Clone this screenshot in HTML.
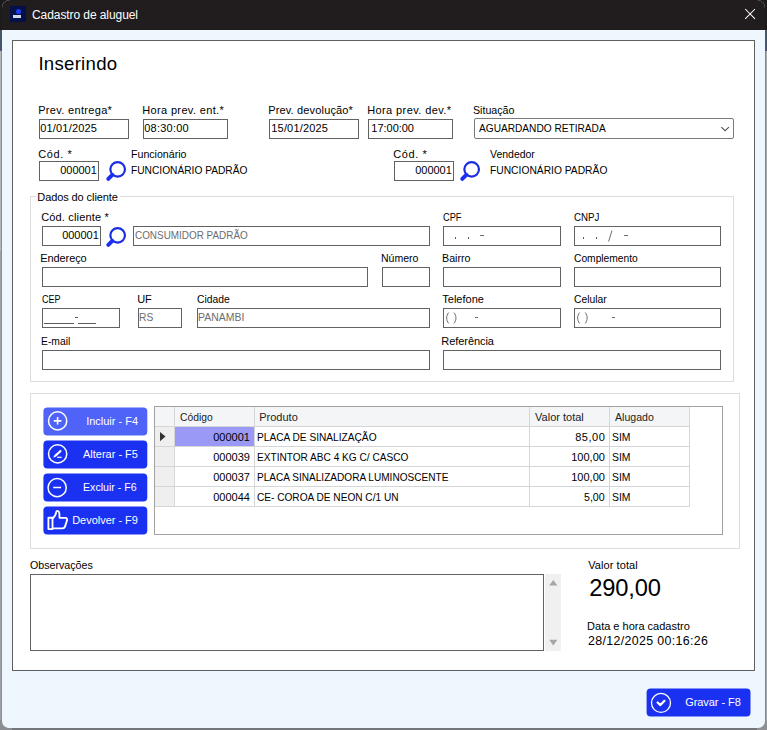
<!DOCTYPE html>
<html>
<head>
<meta charset="utf-8">
<title>Cadastro de aluguel</title>
<style>
html,body{margin:0;padding:0;}
body{width:767px;height:730px;overflow:hidden;position:relative;background:#8c8f94;font-family:"Liberation Sans",sans-serif;font-size:11px;color:#000;}
*{box-sizing:border-box;}
.a{position:absolute;}
.t{position:absolute;white-space:nowrap;transform-origin:0 0;}
.in{position:absolute;height:20px;border:1px solid #626262;background:#fff;}
.gb{position:absolute;border:1px solid #dcdcdc;}
.btn{position:absolute;background:#1b31f2;border-radius:4px;height:28px;}
.hl{position:absolute;height:1px;background:#d4d6d8;}
.vl{position:absolute;width:1px;background:#d4d6d8;}
svg{position:absolute;overflow:visible;}
</style>
</head>
<body>
<!-- outside strips -->
<div class="a" style="left:0;top:0;width:767px;height:30px;background:#1b1b1c;"></div>
<div class="a" style="left:0;top:30px;width:767px;height:21px;background:#46566c;"></div>
<div class="a" style="left:0;top:51px;width:1px;height:200px;background:#b4b7ba;"></div>
<div class="a" style="left:0;top:251px;width:1px;height:477px;background:#9ea0a3;"></div>
<div class="a" style="left:1px;top:51px;width:2px;height:677px;background:#8d8f93;"></div>
<div class="a" style="left:764px;top:51px;width:2px;height:677px;background:#83868a;"></div>
<div class="a" style="left:766px;top:51px;width:1px;height:677px;background:#a6a9ac;"></div>
<div class="a" style="left:0;top:720px;width:767px;height:10px;background:#73777c;"></div>
<div class="a" style="left:0;top:720px;width:12px;height:10px;background:#8a8d92;"></div>
<div class="a" style="left:757px;top:720px;width:10px;height:10px;background:#8e9094;"></div>
<!-- window -->
<div class="a" style="left:2px;top:0;width:763px;height:727.5px;background:#eef7fe;border-radius:8px 8px 7px 7px;overflow:hidden;">
 <div class="a" style="left:0;top:0;width:764px;height:30px;background:#211d1e;"></div>
</div>
<!-- title bar icon -->
<div class="a" style="left:10px;top:6px;width:16px;height:16px;background:#03104a;"></div>
<div class="a" style="left:16px;top:9px;width:5px;height:5px;border-radius:50%;background:#1f3bf5;"></div>
<div class="a" style="left:13px;top:15px;width:8px;height:3px;background:#cfd4e6;"></div>
<svg style="left:740px;top:4px" width="20" height="20" viewBox="0 0 20 20"><path d="M5.2 5 L15 14.8 M15 5 L5.2 14.8" stroke="#fff" stroke-width="1.05" fill="none"/></svg>

<!-- main panel -->
<div class="a" style="left:12px;top:40px;width:743px;height:631px;background:#fff;border:1px solid #5f5f5f;"></div>

<!-- row 1 inputs -->
<div class="in" style="left:39px;top:119px;width:90px;"></div>
<div class="in" style="left:143px;top:119px;width:85px;"></div>
<div class="in" style="left:269px;top:119px;width:90px;"></div>
<div class="in" style="left:368px;top:119px;width:85px;"></div>
<div class="in" style="left:474px;top:118px;width:260px;height:21px;border-color:#7a7a7a;border-radius:2px;"></div>
<svg style="left:715px;top:120px" width="20" height="16" viewBox="0 0 20 16"><path d="M6.3 7.1 L10.1 10.7 L13.9 7.1" stroke="#555" stroke-width="1.1" fill="none"/></svg>

<!-- row 2 -->
<div class="in" style="left:39px;top:161px;width:60px;"></div>
<div class="in" style="left:394px;top:161px;width:60px;"></div>
<svg style="left:100px;top:155px" width="32" height="32" viewBox="0 0 32 32"><circle cx="17.65" cy="14.35" r="7.3" stroke="#1b2de0" stroke-width="2.2" fill="none"/><path d="M12.3 19.8 L8.3 23.8" stroke="#1b2ff0" stroke-width="4" stroke-linecap="round"/></svg>
<svg style="left:454px;top:155px" width="32" height="32" viewBox="0 0 32 32"><circle cx="17.65" cy="14.35" r="7.3" stroke="#1b2de0" stroke-width="2.2" fill="none"/><path d="M12.3 19.8 L8.3 23.8" stroke="#1b2ff0" stroke-width="4" stroke-linecap="round"/></svg>

<!-- group 1 -->
<div class="gb" style="left:30px;top:196px;width:704px;height:186px;"></div>
<div class="a" style="left:36px;top:192px;width:84px;height:10px;background:#fff;"></div>
<div class="in" style="left:42px;top:226px;width:59px;"></div>
<svg style="left:100px;top:221px" width="32" height="32" viewBox="0 0 32 32"><circle cx="17.65" cy="14.35" r="7.3" stroke="#1b2de0" stroke-width="2.2" fill="none"/><path d="M12.3 19.8 L8.3 23.8" stroke="#1b2ff0" stroke-width="4" stroke-linecap="round"/></svg>
<div class="in" style="left:133px;top:226px;width:297px;"></div>
<div class="in" style="left:443px;top:226px;width:118px;"></div>
<div class="in" style="left:574px;top:226px;width:147px;"></div>
<div class="in" style="left:42px;top:267px;width:326px;"></div>
<div class="in" style="left:382px;top:267px;width:48px;"></div>
<div class="in" style="left:443px;top:267px;width:118px;"></div>
<div class="in" style="left:574px;top:267px;width:147px;"></div>
<div class="in" style="left:42px;top:308px;width:78px;"></div>
<div class="in" style="left:138px;top:308px;width:44px;"></div>
<div class="in" style="left:197px;top:308px;width:233px;"></div>
<div class="in" style="left:443px;top:308px;width:118px;"></div>
<div class="in" style="left:574px;top:308px;width:147px;"></div>
<div class="in" style="left:42px;top:350px;width:388px;"></div>
<div class="in" style="left:443px;top:350px;width:278px;"></div>
<!-- masks -->
<svg style="left:0;top:0" width="767" height="730" viewBox="0 0 767 730" shape-rendering="crispEdges">
 <g fill="#5c5c5c">
  <rect x="455" y="237" width="1" height="2"/><rect x="468" y="237" width="1" height="2"/><rect x="480" y="235" width="4" height="1" fill="#6d6d6d"/>
  <rect x="583" y="237" width="1" height="2"/><rect x="596" y="237" width="1" height="2"/><rect x="624" y="235" width="4" height="1" fill="#6d6d6d"/>
  <rect x="44" y="323" width="30" height="1"/><rect x="75" y="317" width="3" height="1"/><rect x="78" y="323" width="18" height="1"/>
  <rect x="475" y="317" width="3" height="1" fill="#6d6d6d"/>
  <rect x="612" y="317" width="3" height="1" fill="#6d6d6d"/>
 </g>
</svg>
<svg style="left:0;top:0" width="767" height="730" viewBox="0 0 767 730">
 <g stroke="#6d6d6d" stroke-width="1" fill="none">
  <path d="M612 230.5 L608.6 241.5"/>
  <path d="M448.6 312.6 C446 316 446 320 448.6 323.4"/><path d="M454 312.6 C456.6 316 456.6 320 454 323.4"/>
  <path d="M579.6 312.6 C577 316 577 320 579.6 323.4"/><path d="M585.2 312.6 C587.8 316 587.8 320 585.2 323.4"/>
 </g>
</svg>

<!-- group 2 -->
<div class="gb" style="left:30px;top:393px;width:710px;height:156px;"></div>
<svg style="left:0;top:0" width="767" height="730" viewBox="0 0 767 730">
 <rect x="43.4" y="407.5" width="103.9" height="27.9" rx="4" fill="#4f63f8"/>
 <rect x="43.4" y="440.5" width="103.9" height="27.9" rx="4" fill="#1b31f2"/>
 <rect x="43.4" y="473.5" width="103.9" height="27.9" rx="4" fill="#1b31f2"/>
 <rect x="43.4" y="506.5" width="103.9" height="27.9" rx="4" fill="#1b31f2"/>
 <rect x="646.6" y="688.4" width="103.9" height="28" rx="4" fill="#1b31f2"/>
</svg>
<svg style="left:42px;top:405px" width="32" height="32" viewBox="0 0 32 32"><circle cx="15.65" cy="15.9" r="9.1" stroke="#fff" stroke-width="1.5" fill="none"/><path d="M11.8 15.85 H19.4 M15.6 12.1 V19.6" stroke="#fff" stroke-width="1.6" fill="none"/></svg>
<svg style="left:42px;top:438px" width="32" height="32" viewBox="0 0 32 32"><circle cx="15.65" cy="15.9" r="9.1" stroke="#fff" stroke-width="1.5" fill="none"/><path d="M12.9 18.1 L18.3 13.2" stroke="#fff" stroke-width="2.2" stroke-linecap="butt" fill="none"/><path d="M11.3 19.5 L12.2 17.3 L13.7 18.9 Z" fill="#fff"/><circle cx="18.4" cy="13.1" r="1.1" fill="#fff"/><path d="M15.1 19.3 H19.6" stroke="#fff" stroke-width="1.2" fill="none"/></svg>
<svg style="left:42px;top:471px" width="32" height="32" viewBox="0 0 32 32"><circle cx="15.15" cy="16.65" r="9.1" stroke="#fff" stroke-width="1.5" fill="none"/><path d="M11.2 16.5 H19.1" stroke="#fff" stroke-width="1.5" fill="none"/></svg>
<svg style="left:42px;top:504px" width="32" height="32" viewBox="0 0 32 32"><g stroke="#fff" stroke-width="1.85" fill="none" stroke-linejoin="round"><path d="M6.4 13.7 h4.1 v11.4 h-4.1 z"/><path d="M10.6 14.4 C12.6 13 13.9 10.4 14.2 8 C14.4 6.5 16.3 6.4 17 8 C17.6 9.4 17.6 11.5 17.5 13.8 L23.4 13.9 C24.9 14 25.4 15 25 16.4 L23 22.6 C22.6 23.8 21.8 24.3 20.5 24.3 L10.6 24.3"/></g></svg>

<!-- grid -->
<div class="a" style="left:154px;top:406px;width:569px;height:129px;background:#fff;border:1px solid #a2a2a2;"></div>
<div class="a" style="left:155px;top:407px;width:535px;height:20px;background:#f4f5f6;"></div>
<div class="a" style="left:155px;top:427px;width:20px;height:80px;background:#efefef;"></div>
<div class="a" style="left:175px;top:427px;width:79px;height:20px;background:#9a9af6;"></div>
<div class="hl" style="left:155px;top:426px;width:535px;"></div>
<div class="hl" style="left:155px;top:446px;width:535px;"></div>
<div class="hl" style="left:155px;top:466px;width:535px;"></div>
<div class="hl" style="left:155px;top:486px;width:535px;"></div>
<div class="hl" style="left:155px;top:506px;width:535px;"></div>
<div class="vl" style="left:174px;top:407px;height:100px;"></div>
<div class="vl" style="left:254px;top:407px;height:100px;"></div>
<div class="vl" style="left:529px;top:407px;height:100px;"></div>
<div class="vl" style="left:609px;top:407px;height:100px;"></div>
<div class="vl" style="left:689px;top:407px;height:100px;"></div>
<svg style="left:158px;top:430px" width="10" height="14" viewBox="0 0 10 14"><path d="M2 2 L7.5 6.6 L2 11.2 Z" fill="#333"/></svg>

<!-- bottom -->
<div class="a" style="left:545px;top:574px;width:16px;height:77px;background:#f0f0f0;"></div>
<div class="a" style="left:30px;top:574px;width:514px;height:77px;border:1px solid #626262;background:#fff;"></div>
<svg style="left:545px;top:574px" width="17" height="77" viewBox="0 0 17 77"><path d="M4.2 11.4 L8.3 6 L12.4 11.4 Z M4.2 65.8 L8.3 71.6 L12.4 65.8 Z" fill="#a6a6a6"/></svg>

<svg style="left:645px;top:686px" width="32" height="32" viewBox="0 0 32 32"><circle cx="16" cy="16.9" r="9.5" stroke="#fff" stroke-width="1.3" fill="none"/><path d="M12.6 16.5 L15.4 19.1 L19.5 14.8" stroke="#fff" stroke-width="2.2" stroke-linecap="round" stroke-linejoin="round" fill="none"/></svg>

<div class="t" style="left:32.02px;top:7.00px;font-size:12px;line-height:16px;color:#fff;letter-spacing:-0.08px;">Cadastro de aluguel</div>
<div class="t" style="left:38.38px;top:51.50px;font-size:18.6px;line-height:24px;color:#000;letter-spacing:0.28px;">Inserindo</div>
<div class="t" style="left:38.19px;top:103.00px;font-size:11px;line-height:14px;color:#000;letter-spacing:0.32px;">Prev. entrega*</div>
<div class="t" style="left:142.19px;top:103.00px;font-size:11px;line-height:14px;color:#000;letter-spacing:0.36px;">Hora prev. ent.*</div>
<div class="t" style="left:268.17px;top:103.00px;font-size:11px;line-height:14px;color:#000;letter-spacing:0.16px;">Prev. devolução*</div>
<div class="t" style="left:367.19px;top:103.00px;font-size:11px;line-height:14px;color:#000;letter-spacing:0.4px;">Hora prev. dev.*</div>
<div class="t" style="left:473.39px;top:103.00px;font-size:11px;line-height:14px;color:#000;transform:scaleX(0.9677);">Situação</div>
<div class="t" style="left:40.23px;top:121.00px;font-size:11px;line-height:14px;color:#000;letter-spacing:0.18px;">01/01/2025</div>
<div class="t" style="left:144.23px;top:121.00px;font-size:11px;line-height:14px;color:#000;letter-spacing:0.24px;">08:30:00</div>
<div class="t" style="left:271.35px;top:121.00px;font-size:11px;line-height:14px;color:#000;letter-spacing:0.16px;">15/01/2025</div>
<div class="t" style="left:371.35px;top:121.00px;font-size:11px;line-height:14px;color:#000;letter-spacing:-0.03px;">17:00:00</div>
<div class="t" style="left:479.05px;top:121.00px;font-size:11px;line-height:14px;color:#000;transform:scaleX(0.9212);">AGUARDANDO RETIRADA</div>
<div class="t" style="left:38.19px;top:147.00px;font-size:11px;line-height:14px;color:#000;letter-spacing:0.61px;">Cód. *</div>
<div class="t" style="left:131.39px;top:147.00px;font-size:11px;line-height:14px;color:#000;transform:scaleX(0.9642);">Funcionário</div>
<div class="t" style="left:131.39px;top:163.00px;font-size:11px;line-height:14px;color:#000;transform:scaleX(0.9265);">FUNCIONÁRIO PADRÃO</div>
<div class="t" style="left:393.19px;top:147.00px;font-size:11px;line-height:14px;color:#000;letter-spacing:0.61px;">Cód. *</div>
<div class="t" style="left:490.05px;top:147.00px;font-size:11px;line-height:14px;color:#000;transform:scaleX(0.952);">Vendedor</div>
<div class="t" style="left:490.35px;top:163.00px;font-size:11px;line-height:14px;color:#000;transform:scaleX(0.9339);">FUNCIONÁRIO PADRÃO</div>
<div class="t" style="left:60.19px;top:163.00px;font-size:11px;line-height:14px;color:#000;letter-spacing:-0.01px;">000001</div>
<div class="t" style="left:415.19px;top:163.00px;font-size:11px;line-height:14px;color:#000;letter-spacing:-0.01px;">000001</div>
<div class="t" style="left:37.29px;top:190.00px;font-size:11px;line-height:14px;color:#000;letter-spacing:-0.09px;">Dados do cliente</div>
<div class="t" style="left:41.17px;top:210.00px;font-size:11px;line-height:14px;color:#000;letter-spacing:0.17px;">Cód. cliente *</div>
<div class="t" style="left:62.17px;top:228.00px;font-size:11px;line-height:14px;color:#000;letter-spacing:-0.01px;">000001</div>
<div class="t" style="left:135.01px;top:228.00px;font-size:11px;line-height:14px;color:#6d6d6d;transform:scaleX(0.901);">CONSUMIDOR PADRÃO</div>
<div class="t" style="left:443.03px;top:210.00px;font-size:11px;line-height:14px;color:#000;transform:scaleX(0.8407);">CPF</div>
<div class="t" style="left:574.01px;top:210.00px;font-size:11px;line-height:14px;color:#000;transform:scaleX(0.8855);">CNPJ</div>
<div class="t" style="left:40.33px;top:251.00px;font-size:11px;line-height:14px;color:#000;letter-spacing:-0.1px;">Endereço</div>
<div class="t" style="left:381.37px;top:251.00px;font-size:11px;line-height:14px;color:#000;transform:scaleX(0.9573);">Número</div>
<div class="t" style="left:442.37px;top:251.00px;font-size:11px;line-height:14px;color:#000;transform:scaleX(0.9718);">Bairro</div>
<div class="t" style="left:574.01px;top:251.00px;font-size:11px;line-height:14px;color:#000;transform:scaleX(0.9318);">Complemento</div>
<div class="t" style="left:42.01px;top:292.00px;font-size:11px;line-height:14px;color:#000;transform:scaleX(0.8195);">CEP</div>
<div class="t" style="left:137.13px;top:292.00px;font-size:11px;line-height:14px;color:#000;letter-spacing:-0.09px;">UF</div>
<div class="t" style="left:197.05px;top:292.00px;font-size:11px;line-height:14px;color:#000;transform:scaleX(0.9388);">Cidade</div>
<div class="t" style="left:442.29px;top:292.00px;font-size:11px;line-height:14px;color:#000;letter-spacing:0.01px;">Telefone</div>
<div class="t" style="left:574.01px;top:292.00px;font-size:11px;line-height:14px;color:#000;transform:scaleX(0.9376);">Celular</div>
<div class="t" style="left:138.95px;top:310.00px;font-size:11px;line-height:14px;color:#6d6d6d;transform:scaleX(0.9344);">RS</div>
<div class="t" style="left:198.39px;top:310.00px;font-size:11px;line-height:14px;color:#6d6d6d;transform:scaleX(0.9507);">PANAMBI</div>
<div class="t" style="left:41.21px;top:334.00px;font-size:11px;line-height:14px;color:#000;transform:scaleX(0.9422);">E-mail</div>
<div class="t" style="left:441.33px;top:334.00px;font-size:11px;line-height:14px;color:#000;letter-spacing:-0.06px;">Referência</div>
<div class="t" style="left:86.17px;top:414.00px;font-size:11px;line-height:14px;color:#fff;letter-spacing:-0.01px;">Incluir - F4</div>
<div class="t" style="left:83.03px;top:447.00px;font-size:11px;line-height:14px;color:#fff;letter-spacing:-0.01px;">Alterar - F5</div>
<div class="t" style="left:83.29px;top:480.00px;font-size:11px;line-height:14px;color:#fff;transform:scaleX(0.9648);">Excluir - F6</div>
<div class="t" style="left:72.19px;top:513.00px;font-size:11px;line-height:14px;color:#fff;letter-spacing:-0.03px;">Devolver - F9</div>
<div class="t" style="left:685.17px;top:695.00px;font-size:11px;line-height:14px;color:#fff;letter-spacing:-0.05px;">Gravar - F8</div>
<div class="t" style="left:179.97px;top:409.50px;font-size:11px;line-height:14px;color:#222;transform:scaleX(0.9382);">Código</div>
<div class="t" style="left:259.15px;top:409.50px;font-size:11px;line-height:14px;color:#222;letter-spacing:0.02px;">Produto</div>
<div class="t" style="left:535.09px;top:409.50px;font-size:11px;line-height:14px;color:#222;">Valor total</div>
<div class="t" style="left:614.97px;top:409.50px;font-size:11px;line-height:14px;color:#222;transform:scaleX(0.962);">Alugado</div>
<div class="t" style="left:213.21px;top:429.50px;font-size:11px;line-height:14px;color:#000;letter-spacing:-0.01px;">000001</div>
<div class="t" style="left:257.21px;top:429.50px;font-size:11px;line-height:14px;color:#000;transform:scaleX(0.9223);">PLACA DE SINALIZAÇÃO</div>
<div class="t" style="left:575.17px;top:429.50px;font-size:11px;line-height:14px;color:#000;letter-spacing:0.54px;">85,00</div>
<div class="t" style="left:612.23px;top:429.50px;font-size:11px;line-height:14px;color:#000;transform:scaleX(0.9433);">SIM</div>
<div class="t" style="left:213.21px;top:449.50px;font-size:11px;line-height:14px;color:#000;letter-spacing:-0.01px;">000039</div>
<div class="t" style="left:257.21px;top:449.50px;font-size:11px;line-height:14px;color:#000;transform:scaleX(0.9179);">EXTINTOR ABC 4 KG C/ CASCO</div>
<div class="t" style="left:571.27px;top:449.50px;font-size:11px;line-height:14px;color:#000;letter-spacing:-0.01px;">100,00</div>
<div class="t" style="left:612.23px;top:449.50px;font-size:11px;line-height:14px;color:#000;transform:scaleX(0.9433);">SIM</div>
<div class="t" style="left:213.21px;top:469.50px;font-size:11px;line-height:14px;color:#000;letter-spacing:-0.01px;">000037</div>
<div class="t" style="left:257.21px;top:469.50px;font-size:11px;line-height:14px;color:#000;transform:scaleX(0.9154);">PLACA SINALIZADORA LUMINOSCENTE</div>
<div class="t" style="left:571.27px;top:469.50px;font-size:11px;line-height:14px;color:#000;letter-spacing:-0.01px;">100,00</div>
<div class="t" style="left:612.23px;top:469.50px;font-size:11px;line-height:14px;color:#000;transform:scaleX(0.9433);">SIM</div>
<div class="t" style="left:213.21px;top:489.50px;font-size:11px;line-height:14px;color:#000;letter-spacing:-0.01px;">000044</div>
<div class="t" style="left:257.11px;top:489.50px;font-size:11px;line-height:14px;color:#000;transform:scaleX(0.9187);">CE- COROA DE NEON C/1 UN</div>
<div class="t" style="left:584.13px;top:489.50px;font-size:11px;line-height:14px;color:#000;transform:scaleX(0.9657);">5,00</div>
<div class="t" style="left:612.23px;top:489.50px;font-size:11px;line-height:14px;color:#000;transform:scaleX(0.9433);">SIM</div>
<div class="t" style="left:29.99px;top:558.00px;font-size:11px;line-height:14px;color:#000;transform:scaleX(0.9691);">Observações</div>
<div class="t" style="left:588.15px;top:558.00px;font-size:11px;line-height:14px;color:#000;letter-spacing:0.09px;">Valor total</div>
<div class="t" style="left:589.36px;top:573.00px;font-size:23.7px;line-height:31px;color:#000;letter-spacing:-0.17px;">290,00</div>
<div class="t" style="left:587.09px;top:619.00px;font-size:11px;line-height:14px;color:#000;">Data e hora cadastro</div>
<div class="t" style="left:587.99px;top:633.00px;font-size:12.4px;line-height:16px;color:#000;letter-spacing:0.35px;">28/12/2025 00:16:26</div>
</body>
</html>
